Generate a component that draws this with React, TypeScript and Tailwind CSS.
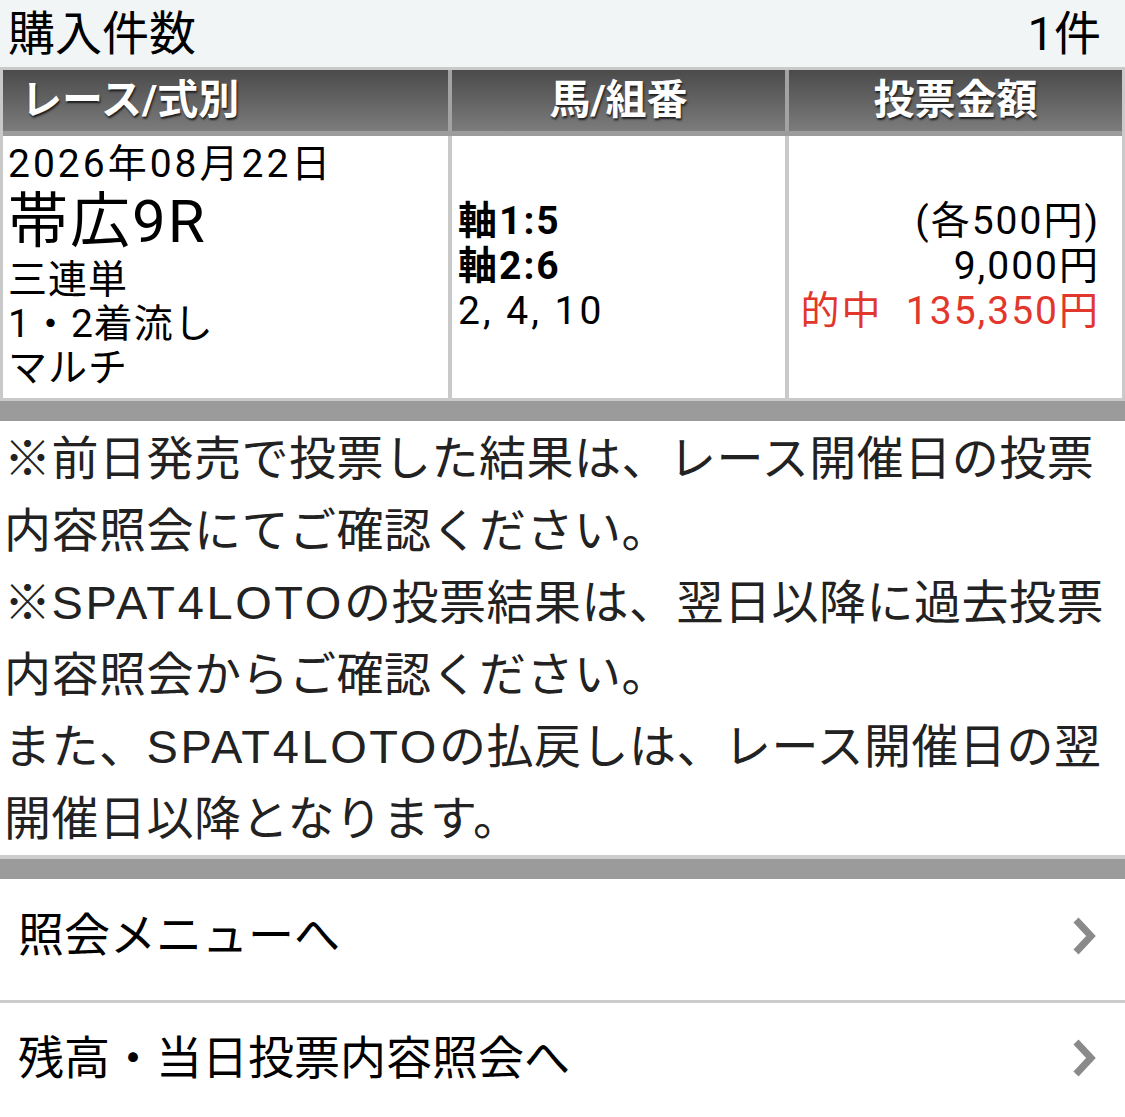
import React from 'react'

const font = "font-['Roboto','Noto_Sans_CJK_JP',sans-serif]"

// Latin part uses a wider face to follow the original font's widths
const Loto = () => <span className="font-['Liberation_Sans',sans-serif] tracking-[2.6px]">SPAT4LOTO</span>

const notes: React.ReactNode[] = [
  '※前日発売で投票した結果は、レース開催日の投票',
  '内容照会にてご確認ください。',
  <>※<Loto />の投票結果は、翌日以降に過去投票</>,
  '内容照会からご確認ください。',
  <>また、<Loto />の払戻しは、レース開催日の翌</>,
  '開催日以降となります。',
]

const menu = ['照会メニューへ', '残高・当日投票内容照会へ']

function Chevron() {
  return (
    <svg width="26" height="38" viewBox="0 0 26 38" className="shrink-0">
      <polyline points="5,3 20,19 5,35" fill="none" stroke="#8a8a8a" strokeWidth="7" />
    </svg>
  )
}

const head = "h-[61px] flex items-center bg-gradient-to-b from-[#4b4b4b] to-[#7c7c7c] text-white font-bold text-[41px] [text-shadow:1px_2px_2px_#1e1e1e]"

export default function App() {
  return (
    <div className={`w-[1125px] bg-white text-black ${font}`}>
      <div className="h-[67px] bg-[#f2f5f6] flex items-center justify-between pl-[8px] pr-[24px] text-[47px] leading-none">
        <span>購入件数</span>
        <span>1件</span>
      </div>

      <div className="bg-[#c9c9c9] pt-[3px] px-[3px] pb-[3px]">
        <div className="grid grid-cols-[445px_333px_1fr] gap-x-[4px] bg-[#a3a3a3] border-b-[5px] border-[#9c9c9c]">
          <div className={`${head} pl-[18px]`}>レース/式別</div>
          <div className={`${head} justify-center`}>馬/組番</div>
          <div className={`${head} justify-center`}>投票金額</div>
        </div>
        <div className="grid grid-cols-[445px_333px_1fr] gap-x-[4px] h-[262px]">
          <div className="bg-white pl-[5px] pt-[6px] text-[39px] leading-[44px] tracking-[1px]">
            <div className="tracking-[3px]">2026年08月22日</div>
            <div className="text-[60px] leading-[72px] tracking-[2px]">帯広9R</div>
            <div>三連単</div>
            <div>1・2着流し</div>
            <div>マルチ</div>
          </div>
          <div className="bg-white flex flex-col justify-center pl-[6px] pb-[2px] text-[39px] leading-[45px] tracking-[2px]">
            <div className="font-bold">軸1:5</div>
            <div className="font-bold">軸2:6</div>
            <div className="tracking-[3px]">2, 4, 10</div>
          </div>
          <div className="bg-white flex flex-col justify-center items-end pr-[22px] pb-[2px] text-[39px] leading-[45px] tracking-[2px]">
            <div>(各500円)</div>
            <div>9,000円</div>
            <div className="text-[#e2372c] whitespace-pre">{'的中  135,350円'}</div>
          </div>
        </div>
      </div>
      <div className="h-[20px] bg-[#9b9b9b]" />

      <div className="px-[4px] pt-[2px] text-[47px] leading-[72px] tracking-[0.5px] text-[#222222]">
        {notes.map((n, i) => (
          <div key={i} className="whitespace-nowrap">{n}</div>
        ))}
      </div>
      <div className="h-[4px] bg-[#cccccc]" />
      <div className="h-[20px] bg-[#9b9b9b]" />

      <div>
        {menu.map((m, i) => (
          <div key={i} className={`h-[121px] flex items-center justify-between pl-[18px] pr-[28px] pb-[8px] ${i > 0 ? 'border-t-[3px] border-[#cccccc]' : ''}`}>
            <span className="text-[46px]">{m}</span>
            <Chevron />
          </div>
        ))}
      </div>
    </div>
  )
}
